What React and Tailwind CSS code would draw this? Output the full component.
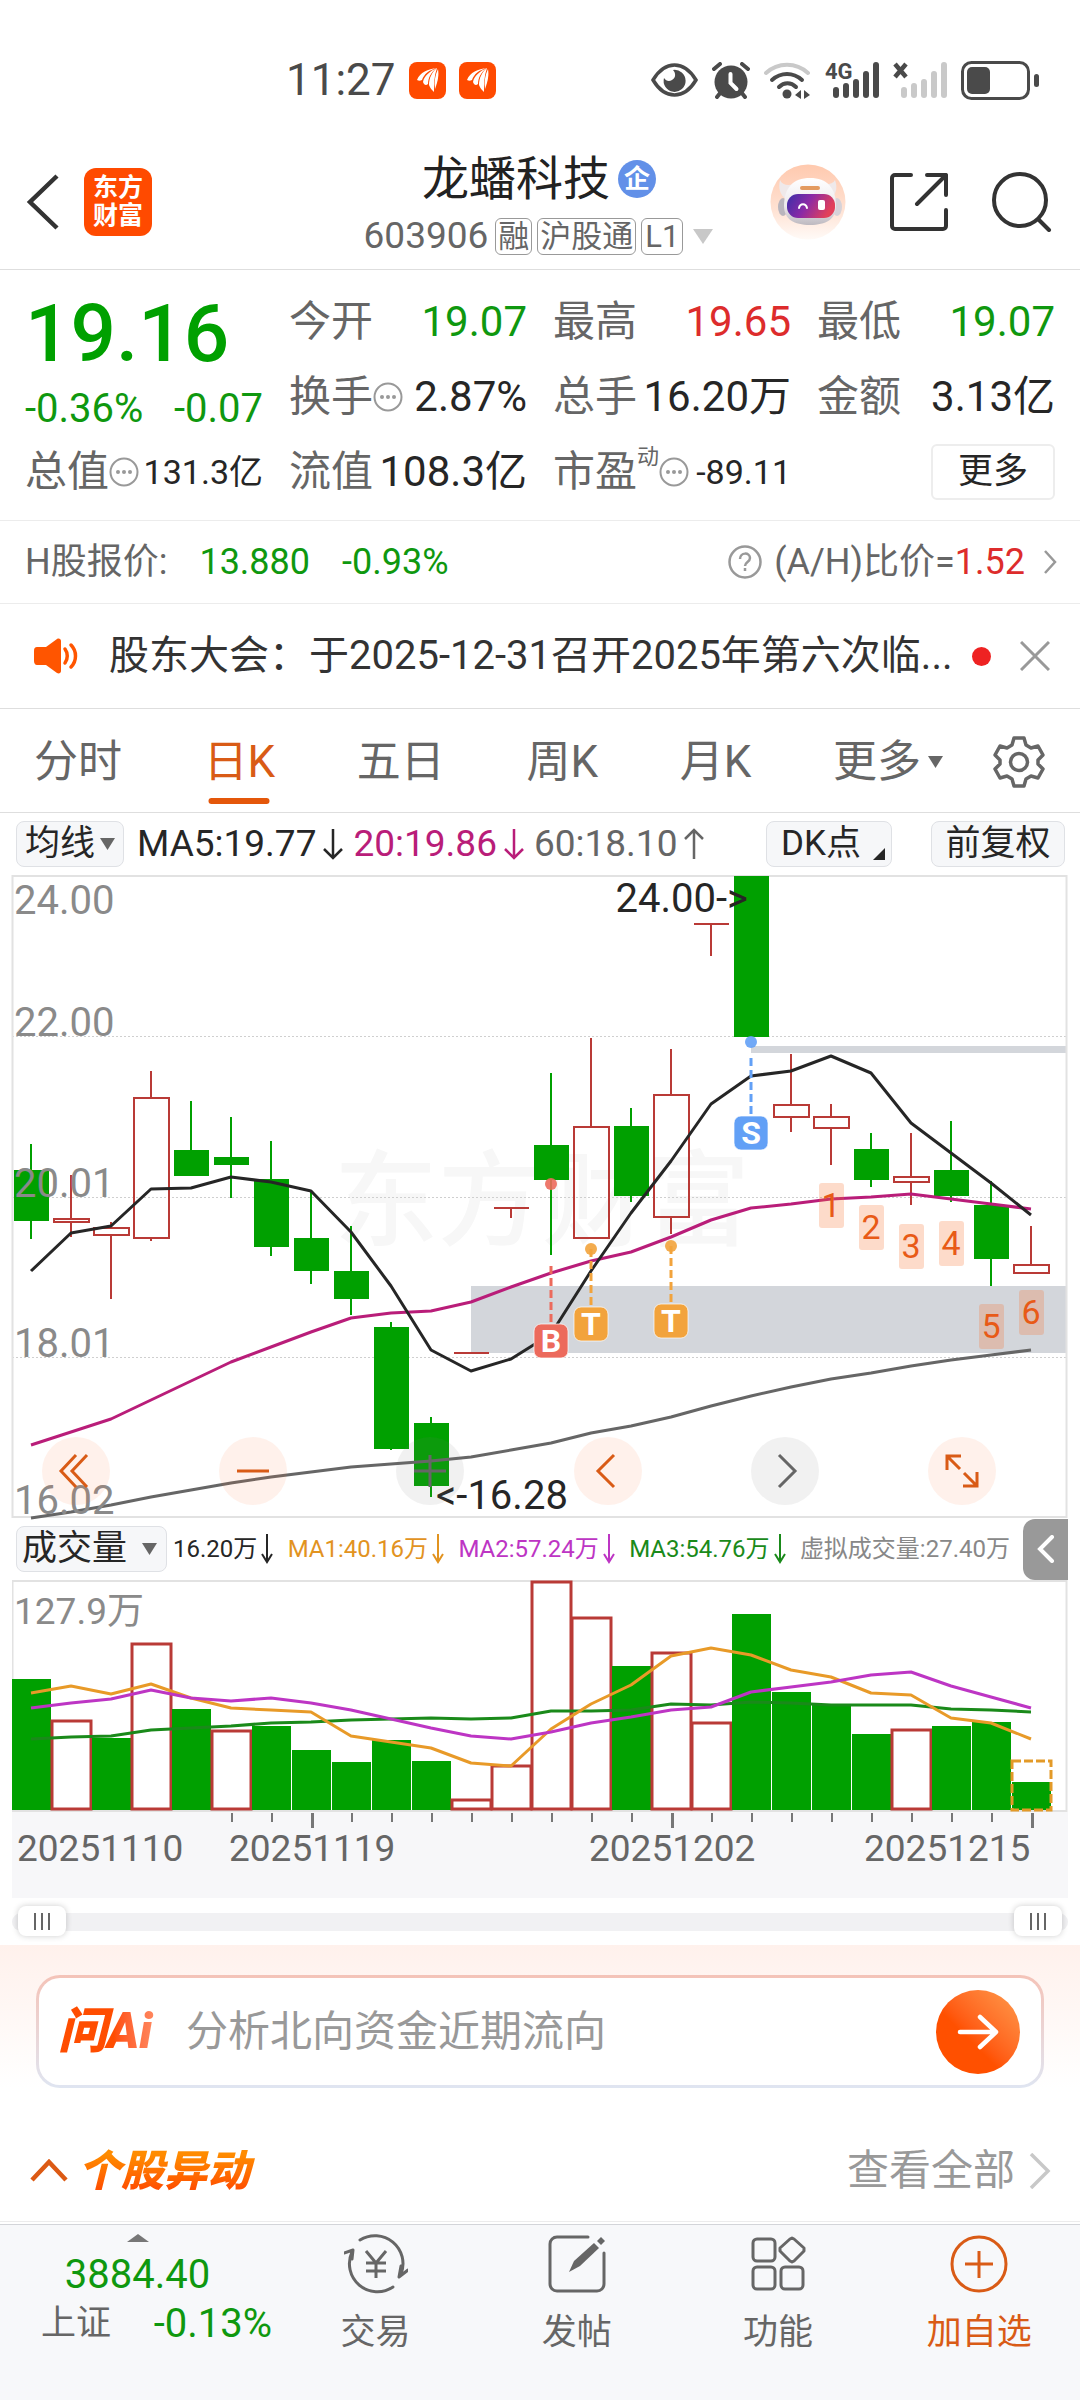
import React from "react";

const RED = "#b93a36";
const GREEN = "#00a000";

// [high, bodyTop, bodyBottom, low, direction] per trading day
const candles = [
  [1144, 1170, 1221, 1239, "down"],
  [1175, 1219, 1222, 1237, "up"],
  [1222, 1228, 1235, 1299, "up"],
  [1071, 1098, 1238, 1241, "up"],
  [1101, 1150, 1176, 1176, "down"],
  [1117, 1157, 1165, 1198, "down"],
  [1141, 1179, 1247, 1256, "down"],
  [1191, 1238, 1271, 1284, "down"],
  [1226, 1271, 1299, 1315, "down"],
  [1322, 1327, 1449, 1450, "down"],
  [1417, 1423, 1486, 1497, "down"],
  [1353, 1353, 1353, 1353, "flat"],
  [1208, 1208, 1208, 1218, "flat"],
  [1073, 1145, 1180, 1255, "down"],
  [1038, 1127, 1238, 1238, "up"],
  [1108, 1126, 1196, 1202, "down"],
  [1049, 1095, 1217, 1234, "up"],
  [924, 924, 924, 956, "flat"],
  [876, 876, 1037, 1037, "down"],
  [1054, 1105, 1117, 1132, "up"],
  [1104, 1117, 1128, 1165, "up"],
  [1133, 1149, 1180, 1187, "down"],
  [1133, 1177, 1182, 1205, "up"],
  [1121, 1170, 1196, 1202, "down"],
  [1181, 1205, 1259, 1286, "down"],
  [1226, 1265, 1273, 1273, "up"],
];

const dayX = (i) => 31 + i * 40;

const ma5 = [1271, 1233, 1226, 1189, 1188, 1177, 1182, 1191, 1232, 1286, 1350, 1371, 1359, 1334, 1271, 1213, 1161, 1104, 1076, 1071, 1056, 1073, 1123, 1153, 1183, 1215];
const ma20 = [1445, 1432, 1419, 1400, 1381, 1362, 1347, 1332, 1318, 1313, 1311, 1302, 1287, 1273, 1261, 1252, 1237, 1220, 1208, 1204, 1199, 1197, 1194, 1199, 1204, 1209];
const ma60 = [1518, 1512, 1505, 1497, 1490, 1483, 1477, 1472, 1467, 1464, 1461, 1457, 1450, 1443, 1433, 1426, 1417, 1406, 1396, 1387, 1379, 1373, 1366, 1360, 1355, 1350];

const volumes = [
  [1679, "down"], [1721, "up"], [1738, "down"], [1644, "up"], [1709, "down"], [1731, "up"], [1726, "down"],
  [1750, "down"], [1762, "down"], [1740, "down"], [1761, "down"], [1800, "up"], [1766, "up"], [1582, "up"],
  [1618, "up"], [1666, "down"], [1653, "up"], [1723, "up"], [1614, "down"], [1692, "down"], [1705, "down"],
  [1734, "down"], [1730, "up"], [1726, "down"], [1722, "down"], [1782, "down"],
];
const vma1 = [1693, 1686, 1694, 1684, 1698, 1708, 1710, 1712, 1736, 1742, 1748, 1763, 1766, 1729, 1704, 1685, 1656, 1648, 1655, 1670, 1677, 1693, 1695, 1718, 1723, 1739];
const vma2 = [1708, 1703, 1699, 1690, 1698, 1701, 1698, 1703, 1710, 1719, 1728, 1736, 1739, 1732, 1723, 1717, 1710, 1707, 1692, 1687, 1682, 1675, 1672, 1686, 1697, 1708];
const vma3 = [1739, 1737, 1736, 1730, 1728, 1726, 1723, 1722, 1720, 1719, 1718, 1719, 1718, 1711, 1711, 1710, 1704, 1705, 1702, 1703, 1705, 1705, 1705, 1709, 1710, 1712];

const toPoints = (ys) => ys.map((y, i) => `${dayX(i)},${y}`).join(" ");

function Candle({ x, data }) {
  const [high, top, bottom, low, kind] = data;
  if (kind === "down") {
    return (
      <g fill={GREEN} stroke="none">
        <rect x={x - 1} y={high} width="2" height={low - high} />
        <rect x={x - 17} y={top} width="35" height={bottom - top} />
      </g>
    );
  }
  return (
    <g stroke={RED} strokeWidth="2" fill="none">
      {high < top && <path d={`M${x} ${high}V${top}`} />}
      {low > bottom && <path d={`M${x} ${bottom}V${low}`} />}
      {kind === "flat" ? <path d={`M${x - 17} ${top}H${x + 18}`} /> : <rect x={x - 17} y={top} width="35" height={bottom - top} />}
    </g>
  );
}

function Marker({ x, y, dot, from, letter, color }) {
  return (
    <g>
      <circle cx={x} cy={dot} r="6" fill={color} opacity="0.9" />
      <path d={`M${x} ${from}V${y - 18}`} stroke={color} strokeWidth="3" strokeDasharray="8 4" />
      <rect x={x - 17} y={y - 17} width="34" height="34" rx="7" fill={color} stroke="#fff" strokeOpacity="0.7" />
      <text x={x} y={y + 11} fontSize="32" fontWeight="700" fill="#fff" textAnchor="middle">{letter}</text>
    </g>
  );
}

function PriceChart() {
  const counts = [[831, 1183], [871, 1205], [911, 1224], [951, 1221], [991, 1304], [1031, 1290]];
  return (
    <svg viewBox="12 875 1056 643" className="block w-full overflow-visible" role="img" aria-label="日K线图">
      <text x="334" y="1238" fontSize="104" fontWeight="500" fill="#f7f7f7">东方财富</text>
      <g stroke="#cfcfcf" strokeDasharray="2 2">
        <path d="M12 1036.500H1067M12 1197.500H1067M12 1357.500H1067" />
      </g>
      <rect x="471" y="1286" width="596" height="67" fill="#d3d6db" />
      <rect x="751" y="1046" width="316" height="7" fill="#d3d6db" />
      <rect x="12.500" y="876" width="1054" height="641" fill="none" stroke="#e2e2e2" strokeWidth="2" />
      {candles.map((c, i) => <Candle key={i} x={dayX(i)} data={c} />)}
      <g fill="none" strokeWidth="3" strokeLinejoin="round">
        <polyline points={toPoints(ma60)} stroke="#666" />
        <polyline points={toPoints(ma20)} stroke="#b91d79" />
        <polyline points={toPoints(ma5)} stroke="#262626" />
      </g>
      <g fontSize="40" fill="#8a8a8a">
        <text x="14" y="914">24.00</text>
        <text x="14" y="1036">22.00</text>
        <text x="14" y="1197">20.01</text>
        <text x="14" y="1357">18.01</text>
        <text x="14" y="1514">16.02</text>
      </g>
      <g fontSize="40" fill="#262626">
        <text x="748" y="912" textAnchor="end">24.00-&gt;</text>
        <text x="436" y="1509">&lt;-16.28</text>
      </g>
      <Marker x={751} y={1133} dot={1042} from={1058} letter="S" color="#62a0f6" />
      <Marker x={551} y={1341} dot={1184} from={1266} letter="B" color="#ec6a5c" />
      <Marker x={591} y={1324} dot={1249} from={1249} letter="T" color="#f2a33c" />
      <Marker x={671} y={1321} dot={1246} from={1246} letter="T" color="#f2a33c" />
      {counts.map(([x, y], i) => (
        <g key={x}>
          <rect x={x - 12} y={y} width="25" height="45" rx="3" fill="#f97332" fillOpacity="0.26" />
          <text x={x} y={y + 34} fontSize="34" textAnchor="middle" fill="#e85a17">{i + 1}</text>
        </g>
      ))}
    </svg>
  );
}

function VolumeChart() {
  return (
    <svg viewBox="12 1580 1056 318" className="block w-full" role="img" aria-label="成交量图">
      <rect x="12" y="1812" width="1056" height="86" fill="#f7f7f9" />
      <rect x="12.500" y="1581" width="1054" height="230" fill="none" stroke="#e2e2e2" strokeWidth="2" />
      <text x="14" y="1624" fontSize="37" fill="#8a8a8a">127.9万</text>
      {volumes.map(([top, kind], i) =>
        kind === "down" ? (
          <rect key={i} x={dayX(i) - 19} y={top} width="39" height={1810 - top} fill={GREEN} />
        ) : (
          <rect key={i} x={dayX(i) - 19} y={top} width="39" height={1809 - top} fill="#fff" stroke={RED} strokeWidth="3" />
        )
      )}
      <rect x="1012" y="1761" width="39" height="49" fill="none" stroke="#e39a28" strokeWidth="3" strokeDasharray="9 3" />
      <g fill="none" strokeWidth="3" strokeLinejoin="round">
        <polyline points={toPoints(vma3)} stroke="#1a8a1a" />
        <polyline points={toPoints(vma1)} stroke="#e89a28" />
        <polyline points={toPoints(vma2)} stroke="#bd35c4" />
      </g>
      <g fill="#777">
        {Array.from({ length: 21 }, (_, k) => k + 5).map((i) => {
          const major = i === 7 || i === 16 || i === 25;
          return <rect key={i} x={dayX(i)} y="1813" width={major ? 3 : 2} height={major ? 15 : 9} />;
        })}
      </g>
      <g fontSize="37" fill="#666">
        <text x="17" y="1861">20251110</text>
        <text x="229" y="1861">20251119</text>
        <text x="589" y="1861">20251202</text>
        <text x="864" y="1861">20251215</text>
      </g>
    </svg>
  );
}

function AppBadge() {
  return (
    <svg viewBox="0 0 37 37" className="size-[37px]" aria-hidden="true">
      <rect width="37" height="37" rx="8" fill="#ff4a00" />
      <g fill="#fff">
        <path d="M28 6c-9 1-17 4-20 12 2 1 3 1 5 0C15 12 20 8 28 6z" />
        <path d="M28 6c-7 3-13 8-14 14 1 3 3 4 5 2 0-6 3-12 9-16z" />
        <path d="M28 6c-5 4-8 10-8 17 1 3 3 5 5 7 0-8 0-16 3-24z" />
        <path d="M29 7c1 6 0 12-3 20-1-7 0-14 3-20z" />
      </g>
    </svg>
  );
}

function SignalBars({ tops, color, start }) {
  return tops.map((t, i) => <rect key={i} x={start + i * 10} y={t} width="6" height={36 - t} rx="3" fill={color} />);
}

function StatusBar() {
  return (
    <div className="flex h-[134px] items-center justify-between pt-[26px] pr-[41px] pl-[286px] text-[#4a4a4a]">
      <div className="flex items-center gap-[13px]">
        <span className="text-[44px] leading-[48px]">11:27</span>
        <AppBadge />
        <AppBadge />
      </div>
      <div className="flex items-center gap-[14px]">
        <svg viewBox="0 0 47 34" className="h-[34px] w-[47px]" aria-hidden="true">
          <path d="M2 17C8 7 15 2 23.500 2S39 7 45 17C39 27 32 32 23.500 32S8 27 2 17z" fill="none" stroke="#4a4a4a" strokeWidth="3.500" />
          <path d="M22 7a11 11 0 1 1-9 8c2 3 5 4 8 2 4-2 4-7 1-10z" fill="#4a4a4a" />
        </svg>
        <svg viewBox="0 0 38 37" className="h-[37px] w-[38px]" aria-hidden="true">
          <circle cx="19" cy="20" r="16.500" fill="#4a4a4a" />
          <path d="M2 7l6-5M36 7l-6-5M5 35l4-5M33 35l-4-5" stroke="#4a4a4a" strokeWidth="4" strokeLinecap="round" />
          <path d="M18.500 12v9l6 6" fill="none" stroke="#fff" strokeWidth="4" strokeLinecap="round" />
        </svg>
        <svg viewBox="0 0 47 37" className="h-[37px] w-[47px]" aria-hidden="true">
          <g fill="none" strokeWidth="4" strokeLinecap="round">
            <path d="M2 11C14 0 32 0 44 11" stroke="#c9c9c9" />
            <path d="M8 18c9-8 21-8 30 0M15 25c5-5 12-5 17 0" stroke="#4a4a4a" />
          </g>
          <circle cx="23" cy="32" r="4.500" fill="#4a4a4a" />
          <path d="M31 33l6-5v9zM46 33l-6 4V28z" fill="#4a4a4a" />
        </svg>
        <svg viewBox="0 0 54 36" className="h-[36px] w-[54px] overflow-visible" aria-hidden="true">
          <text x="0" y="17" fontSize="22" fontWeight="700" fill="#4a4a4a">4G</text>
          <SignalBars tops={[25, 21, 17, 9, 0]} color="#4a4a4a" start={8} />
        </svg>
        <svg viewBox="0 0 54 36" className="h-[36px] w-[54px]" aria-hidden="true">
          <path d="M2 2l11 13M13 2L2 15" stroke="#4a4a4a" strokeWidth="4.500" />
          <SignalBars tops={[25, 21, 17, 9, 0]} color="#c9c9c9" start={8} />
        </svg>
        <svg viewBox="0 0 78 39" className="h-[39px] w-[78px]" aria-hidden="true">
          <rect x="1.500" y="1.500" width="66" height="36" rx="9" fill="none" stroke="#4a4a4a" strokeWidth="3" />
          <rect x="6" y="6" width="23" height="27" rx="5" fill="#4a4a4a" />
          <rect x="73" y="13" width="5" height="13" rx="2.500" fill="#4a4a4a" />
        </svg>
      </div>
    </div>
  );
}

function RobotIcon() {
  return (
    <svg viewBox="0 0 76 76" className="size-[76px]" aria-hidden="true">
      <defs>
        <linearGradient id="robotBg" x1="0" y1="0" x2="0" y2="1">
          <stop offset="0" stopColor="#ffc9ae" />
          <stop offset="0.600" stopColor="#ffe2d3" />
          <stop offset="1" stopColor="#fffaf7" />
        </linearGradient>
        <linearGradient id="robotFace" x1="0" y1="0" x2="1" y2="0.300">
          <stop offset="0" stopColor="#3a2fa8" />
          <stop offset="0.500" stopColor="#8b2aa6" />
          <stop offset="1" stopColor="#e2405a" />
        </linearGradient>
        <linearGradient id="robotHead" x1="0" y1="0" x2="0" y2="1">
          <stop offset="0" stopColor="#fff" />
          <stop offset="0.600" stopColor="#ece9ec" />
          <stop offset="1" stopColor="#bdb9c0" />
        </linearGradient>
      </defs>
      <circle cx="38" cy="38" r="37.500" fill="url(#robotBg)" />
      <ellipse cx="13" cy="43" rx="5" ry="9" fill="#b9b5bd" />
      <ellipse cx="67" cy="43" rx="5" ry="9" fill="#d6d2d8" />
      <path d="M10 16c-2 8 0 15 6 19l8-15c-6 2-12 1-14-4zM65 16c3 8 1 15-5 19l-8-15c6 1 11 0 13-4z" fill="#efe9ea" />
      <path d="M14 42c0-18 9-28 26-28s26 10 26 28c0 13-10 19-26 19S14 55 14 42z" fill="url(#robotHead)" />
      <rect x="30" y="22" width="20" height="4" rx="2" fill="#e39a5f" />
      <rect x="17" y="30" width="48" height="24" rx="11" fill="url(#robotFace)" />
      <path d="M29 44c1-5 7-5 8 0" fill="none" stroke="#fff" strokeWidth="2" strokeLinecap="round" />
      <rect x="48" y="36" width="7" height="10" rx="2" fill="#fff" />
    </svg>
  );
}

function Header() {
  return (
    <header className="grid h-[136px] grid-cols-[1fr_auto_1fr] items-center border-b border-[#dedede] pr-[28px] pl-[26px]">
      <div className="flex items-center gap-[24px]">
        <button type="button" aria-label="返回">
          <svg viewBox="0 0 34 56" className="h-[56px] w-[34px]" fill="none" stroke="#333" strokeWidth="4.500">
            <path d="M31 2L4 28l27 26" />
          </svg>
        </button>
        <div className="flex size-[68px] flex-col items-center justify-center rounded-xl bg-[#ff4a00] text-[25px] leading-[28px] font-bold text-white">
          <span>东方</span>
          <span>财富</span>
        </div>
      </div>
      <div className="flex flex-col items-center gap-[4px] pt-[5px]">
        <h1 className="flex items-center gap-[8px] text-[47px] leading-[60px] text-[#222]">
          龙蟠科技
          <span className="flex size-[38px] items-center justify-center rounded-full bg-[#6290e8] text-[26px] leading-[38px] font-bold text-white">企</span>
        </h1>
        <div className="flex items-center gap-[5px] text-[37px] leading-[46px] text-[#666]">
          <span className="pr-[2px]">603906</span>
          <span className="rounded-md border border-[#999] px-[2px] text-[31px] leading-[35px]">融</span>
          <span className="rounded-md border border-[#999] px-[2px] text-[31px] leading-[35px]">沪股通</span>
          <span className="rounded-md border border-[#999] px-[3px] text-[31px] leading-[35px]">L1</span>
          <svg viewBox="0 0 22 15" className="ml-[4px] h-[15px] w-[22px]" aria-hidden="true">
            <path d="M1 0h20L11 15z" fill="#c8c8c8" />
          </svg>
        </div>
      </div>
      <div className="flex items-center justify-end gap-[44px]">
        <button type="button" aria-label="智能助手">
          <RobotIcon />
        </button>
        <button type="button" aria-label="分享">
          <svg viewBox="0 0 58 58" className="size-[58px]" fill="none" stroke="#333" strokeWidth="4" strokeLinecap="round" strokeLinejoin="round">
            <path d="M21 2H5a3 3 0 0 0-3 3v48a3 3 0 0 0 3 3h48a3 3 0 0 0 3-3V37" />
            <path d="M37 2h19v20M56 2L27 31" />
          </svg>
        </button>
        <button type="button" aria-label="搜索">
          <svg viewBox="0 0 60 60" className="size-[60px]" fill="none" stroke="#333" strokeWidth="4" strokeLinecap="round">
            <circle cx="28" cy="28" r="26" />
            <path d="M47 48l10 10" />
          </svg>
        </button>
      </div>
    </header>
  );
}

function DotsIcon() {
  return (
    <svg viewBox="0 0 30 30" className="size-[30px] shrink-0" aria-hidden="true">
      <circle cx="15" cy="15" r="13.500" fill="none" stroke="#999" strokeWidth="2" />
      <g fill="#999">
        <circle cx="9" cy="15" r="2" />
        <circle cx="15" cy="15" r="2" />
        <circle cx="21" cy="15" r="2" />
      </g>
    </svg>
  );
}

function Stat({ label, value, color = "text-[#262626]", dots, small, sup }) {
  return (
    <div className="flex h-[75px] items-center justify-between whitespace-nowrap">
      <span className="flex items-center text-[42px] leading-[50px] text-[#666]">
        {label}
        {sup && <sup className="top-0 self-start text-[22px] leading-[20px]">{sup}</sup>}
        {dots && <DotsIcon />}
      </span>
      <span className={`${small ? "text-[34px]" : "text-[42px]"} leading-[50px] ${color}`}>{value}</span>
    </div>
  );
}

function Quote() {
  const green = "text-[#0f980f]";
  return (
    <section className="grid grid-cols-4 gap-x-[26px] border-b border-[#ececec] px-[25px] pt-[14px] pb-[11px]">
      <div className="row-span-2">
        <div className="text-[80px] leading-[100px] font-medium text-[#00a000]">19.16</div>
        <div className={`flex justify-between text-[40px] leading-[50px] ${green}`}>
          <span>-0.36%</span>
          <span>-0.07</span>
        </div>
      </div>
      <Stat label="今开" value="19.07" color={green} />
      <Stat label="最高" value="19.65" color="text-[#dd2c2c]" />
      <Stat label="最低" value="19.07" color={green} />
      <Stat label="换手" value="2.87%" dots />
      <Stat label="总手" value="16.20万" />
      <Stat label="金额" value="3.13亿" />
      <Stat label="总值" value="131.3亿" dots small />
      <Stat label="流值" value="108.3亿" />
      <Stat label="市盈" value="-89.11" sup="动" dots small />
      <div className="flex h-[75px] items-center justify-end">
        <button type="button" className="h-[56px] w-[124px] rounded-md border-2 border-[#ededed] text-[35px] leading-[50px] text-[#262626]">更多</button>
      </div>
    </section>
  );
}

function HShare() {
  return (
    <a href="#h-share" className="flex h-[83px] items-center justify-between border-b border-[#ececec] pr-[23px] pb-px pl-[25px] text-[36px] leading-[46px] text-[#666]">
      <span className="flex items-center">
        H股报价:
        <span className="ml-[32px] text-[#0f980f]">13.880</span>
        <span className="ml-[32px] text-[#0f980f]">-0.93%</span>
      </span>
      <span className="flex items-center">
        <svg viewBox="0 0 34 34" className="mr-[12px] size-[34px]" aria-hidden="true" fill="none" stroke="#999" strokeWidth="2.500">
          <circle cx="17" cy="17" r="15.500" />
          <path d="M12 14c0-7 10-7 10-1 0 4-5 4-5 8M17 23v3" />
        </svg>
        (A/H)比价=<span className="text-[#dd2c2c]">1.52</span>
        <svg viewBox="0 0 13 24" className="ml-[19px] h-[24px] w-[13px]" aria-hidden="true" fill="none" stroke="#999" strokeWidth="2.500">
          <path d="M1 1l10 11L1 23" />
        </svg>
      </span>
    </a>
  );
}

function Notice() {
  return (
    <div className="flex h-[105px] items-center border-b border-[#dedede] pr-[30px] pl-[33px]">
      <svg viewBox="0 0 46 36" className="mr-[30px] h-[36px] w-[46px] shrink-0" aria-hidden="true">
        <path d="M4 9h9L24 1c2-1 4 0 4 2v30c0 2-2 3-4 2L13 27H4c-2 0-3-2-3-4V13c0-3 1-4 3-4z" fill="#ff5500" />
        <path d="M32 11c3 4 3 10 0 14M38 7c6 6 6 16 0 22" fill="none" stroke="#ff5500" strokeWidth="3.500" strokeLinecap="round" />
      </svg>
      <p className="min-w-0 flex-1 truncate text-[40px] leading-[50px] text-[#333]">股东大会：于2025-12-31召开2025年第六次临...</p>
      <span className="ml-1 size-[19px] shrink-0 rounded-full bg-[#ee2222]" />
      <button type="button" aria-label="关闭" className="ml-[29px]">
        <svg viewBox="0 0 30 30" className="size-[30px]" stroke="#999" strokeWidth="3">
          <path d="M1 1l28 28M29 1L1 29" />
        </svg>
      </button>
    </div>
  );
}

function Tabs() {
  const tabs = ["分时", "日K", "五日", "周K", "月K"];
  return (
    <nav className="flex h-[104px] items-center border-b border-[#dedede] pt-[2px] pr-[35px] pl-[34px] text-[44px] leading-[56px] text-[#666]">
      <div className="flex h-full flex-1 items-center justify-between">
        {tabs.map((t) =>
          t === "日K" ? (
            <button type="button" key={t} aria-current="page" className="relative flex h-full items-center text-[#d95b16]">
              {t}
              <span className="absolute bottom-[8px] left-1/2 h-[6px] w-[61px] -translate-x-1/2 rounded-full bg-[#e4570a]" />
            </button>
          ) : (
            <button type="button" key={t}>{t}</button>
          )
        )}
        <button type="button" className="flex items-center gap-[7px]">
          更多
          <svg viewBox="0 0 15 12" className="h-[12px] w-[15px]" aria-hidden="true">
            <path d="M0 0h15L7.500 12z" fill="#666" />
          </svg>
        </button>
      </div>
      <button type="button" aria-label="设置" className="ml-[50px]">
        <svg viewBox="0 0 52 52" className="size-[52px]" fill="none" stroke="#666" strokeWidth="3.500" strokeLinejoin="round">
          <path d="M21 2h10l2 7 5 3 7-2 5 9-5 5v4l5 5-5 9-7-2-5 3-2 7H21l-2-7-5-3-7 2-5-9 5-5v-4l-5-5 5-9 7 2 5-3z" />
          <circle cx="26" cy="26" r="8.500" />
        </svg>
      </button>
    </nav>
  );
}

function Arrow({ up }) {
  return (
    <svg viewBox="0 0 20 32" className="h-[32px] w-[20px] shrink-0" fill="none" stroke="currentColor" strokeWidth="2.500" aria-hidden="true">
      <path d={up ? "M10 31V2M1 11l9-9 9 9" : "M10 1v29M1 21l9 9 9-9"} />
    </svg>
  );
}

function SmallArrow() {
  return (
    <svg viewBox="0 0 12 30" className="h-[30px] w-[12px] shrink-0" fill="none" stroke="currentColor" strokeWidth="2" aria-hidden="true">
      <path d="M6 0v28M1 20l5 8 5-8" />
    </svg>
  );
}

const chip = "h-[46px] rounded-lg border border-[#dfe1e5] bg-[#f6f7f9] text-[35px] leading-[44px] text-[#262626]";

function MaRow() {
  return (
    <div className="flex h-[62px] items-center pr-[15px] pl-[16px] text-[37px] leading-[46px] whitespace-nowrap">
      <label className={`${chip} relative flex w-[108px] items-center`}>
        <select aria-label="均线" className="w-full appearance-none bg-transparent pl-[8px] outline-none">
          <option>均线</option>
        </select>
        <svg viewBox="0 0 15 12" className="pointer-events-none absolute right-[8px] h-[12px] w-[15px]" aria-hidden="true">
          <path d="M0 0h15L7.500 12z" fill="#666" />
        </svg>
      </label>
      <span className="ml-[13px] flex items-center gap-[7px] text-[#262626]">MA5:19.77<Arrow /></span>
      <span className="ml-[10px] flex items-center gap-[7px] text-[#b91d79]">20:19.86<Arrow /></span>
      <span className="ml-[10px] flex items-center gap-[7px] text-[#666]">60:18.10<Arrow up /></span>
      <button type="button" className={`${chip} relative mr-[39px] ml-auto w-[126px] pr-[16px]`}>
        DK点
        <svg viewBox="0 0 12 12" className="absolute right-[6px] bottom-[6px] size-[12px]" aria-hidden="true">
          <path d="M12 0v12H0z" fill="#262626" />
        </svg>
      </button>
      <button type="button" className={`${chip} w-[134px]`}>前复权</button>
    </div>
  );
}

function RoundButton({ label, muted, children }) {
  return (
    <button
      type="button"
      aria-label={label}
      className={`flex size-[68px] items-center justify-center rounded-full ${muted ? "bg-[#777]/10 text-[#666]" : "bg-[#ff7a3c]/10 text-[#d95b16]"}`}
    >
      <svg viewBox="0 0 36 36" className="size-[36px]" fill="none" stroke="currentColor" strokeWidth="3">
        {children}
      </svg>
    </button>
  );
}

function ChartControls() {
  return (
    <div className="absolute right-[72px] bottom-[13px] left-[30px] flex justify-between">
      <RoundButton label="最早"><path d="M18 2L3 18l15 16M29 2L14 18l15 16" /></RoundButton>
      <RoundButton label="缩小"><path d="M2 18h32" /></RoundButton>
      <RoundButton label="放大" muted><path d="M2 18h32M18 2v32" /></RoundButton>
      <RoundButton label="向左"><path d="M24 2L8 18l16 16" /></RoundButton>
      <RoundButton label="向右" muted><path d="M12 2l16 16-16 16" /></RoundButton>
      <RoundButton label="全屏"><path d="M3 17V3h14M3 3l13 13M33 19v14H19M33 33L20 20" /></RoundButton>
    </div>
  );
}

function VolumeRow() {
  return (
    <div className="flex h-[62px] items-center pl-[16px] text-[24px] leading-[46px] whitespace-nowrap">
      <label className={`${chip} relative flex w-[151px] items-center`}>
        <select aria-label="副图指标" className="w-full appearance-none bg-transparent pl-[5px] outline-none">
          <option>成交量</option>
        </select>
        <svg viewBox="0 0 15 12" className="pointer-events-none absolute right-[9px] h-[12px] w-[15px]" aria-hidden="true">
          <path d="M0 0h15L7.500 12z" fill="#666" />
        </svg>
      </label>
      <div className="mr-[13px] ml-[6px] flex flex-1 items-center justify-between">
        <span className="flex items-center gap-[4px] text-[#262626]">16.20万<SmallArrow /></span>
        <span className="flex items-center gap-[4px] text-[#e2931f]">MA1:40.16万<SmallArrow /></span>
        <span className="flex items-center gap-[4px] text-[#bd35c4]">MA2:57.24万<SmallArrow /></span>
        <span className="flex items-center gap-[4px] text-[#1a8a1a]">MA3:54.76万<SmallArrow /></span>
        <span className="text-[#888]">虚拟成交量:27.40万</span>
      </div>
      <button type="button" aria-label="展开指标" className="mr-[12px] flex h-[61px] w-[45px] items-center justify-center rounded-l-xl bg-[#999]">
        <svg viewBox="0 0 18 28" className="h-[28px] w-[18px]" fill="none" stroke="#fff" strokeWidth="4" strokeLinecap="round">
          <path d="M15 2L3 14l12 12" />
        </svg>
      </button>
    </div>
  );
}

const range =
  "pointer-events-none absolute inset-x-[6px] top-[8px] h-[30px] appearance-none bg-transparent [&::-webkit-slider-thumb]:pointer-events-auto [&::-webkit-slider-thumb]:h-[30px] [&::-webkit-slider-thumb]:w-[48px] [&::-webkit-slider-thumb]:appearance-none [&::-webkit-slider-thumb]:rounded-lg [&::-webkit-slider-thumb]:bg-white [&::-webkit-slider-thumb]:bg-[linear-gradient(90deg,#666_2px,transparent_2px,transparent_7px,#666_7px,#666_9px,transparent_9px,transparent_14px,#666_14px,#666_16px,transparent_16px)] [&::-webkit-slider-thumb]:bg-[length:16px_17px] [&::-webkit-slider-thumb]:bg-center [&::-webkit-slider-thumb]:bg-no-repeat [&::-webkit-slider-thumb]:shadow-[0_0_6px_rgba(0,0,0,0.2)]";

function RangeSlider() {
  return (
    <div className="relative mx-[12px] flex h-[47px] items-center">
      <div className="h-[18px] w-full rounded-full bg-[#f1f1f3]" />
      <input type="range" aria-label="起始日期" defaultValue="0" className={range} />
      <input type="range" aria-label="结束日期" defaultValue="100" className={range} />
    </div>
  );
}

function AskAi() {
  return (
    <section className="bg-linear-to-b from-[#fff1ec] to-white px-[36px] pt-[30px]">
      <div className="rounded-3xl bg-linear-to-b from-[#f4c3b8] to-[#dfe5f1] p-[3px]">
        <form className="flex h-[107px] items-center rounded-[21px] bg-white pt-px pr-[21px] pl-[19px]">
          <span aria-label="问Ai" className="flex w-[112px] items-center bg-linear-to-r from-[#ff4d00] from-50% to-[#ff9a75] bg-clip-text text-[49px] leading-[56px] font-black text-transparent italic">
            问Ai
          </span>
          <input
            type="text"
            aria-label="向AI提问"
            placeholder="分析北向资金近期流向"
            className="ml-[16px] min-w-0 flex-1 text-[42px] leading-[56px] outline-none placeholder:text-[#999] placeholder:opacity-100"
          />
          <button type="button" aria-label="发送" className="flex size-[84px] items-center justify-center rounded-full bg-linear-to-tr from-[#ff5000] from-40% to-[#ff9a4a]">
            <svg viewBox="0 0 42 36" className="h-[36px] w-[42px]" fill="none" stroke="#fff" strokeWidth="4.500" strokeLinecap="round" strokeLinejoin="round">
              <path d="M3 18h36M23 3l16 15-16 15" />
            </svg>
          </button>
        </form>
      </div>
    </section>
  );
}

function MovesHeader() {
  return (
    <section className="flex h-[134px] items-center justify-between border-b border-[#ececec] pt-[32px] pr-[29px] pl-[30px]">
      <h2 className="flex items-center gap-[10px]">
        <svg viewBox="0 0 38 23" className="h-[23px] w-[38px]" fill="none" stroke="#dc5a14" strokeWidth="4.500" aria-hidden="true">
          <path d="M2 21L19 3l17 18" />
        </svg>
        <span className="bg-linear-to-b from-[#ff8c00] from-20% to-[#ff5000] to-80% bg-clip-text pr-2 text-[43px] leading-[56px] font-black text-transparent italic">个股异动</span>
      </h2>
      <a href="#all" className="flex items-center gap-[14px] text-[42px] leading-[56px] text-[#999]">
        查看全部
        <svg viewBox="0 0 22 36" className="h-[36px] w-[22px]" fill="none" stroke="#c8c8c8" strokeWidth="3.500" aria-hidden="true">
          <path d="M2 1l17 17L2 35" />
        </svg>
      </a>
    </section>
  );
}

function NavItem({ label, accent, children }) {
  return (
    <button type="button" className={`flex flex-1 flex-col items-center gap-[15px] text-[35px] leading-[48px] ${accent ? "text-[#d95b16]" : "text-[#666]"}`}>
      <svg viewBox="0 0 64 60" className="h-[60px] w-[64px]" fill="none" stroke="currentColor" strokeWidth="3" strokeLinecap="round" strokeLinejoin="round" aria-hidden="true">
        {children}
      </svg>
      {label}
    </button>
  );
}

function BottomNav() {
  return (
    <nav className="mt-[2px] flex flex-1 items-start border-t border-[#d3d5d9] bg-[#f7f8fa] pt-[9px]">
      <a href="#index" className="flex w-[275px] flex-col items-center">
        <svg viewBox="0 0 22 8" className="h-[8px] w-[22px]" aria-hidden="true">
          <path d="M0 8L11 0l11 8z" fill="#777" />
        </svg>
        <span className="mt-[8px] text-[40px] leading-[50px] text-[#0f980f]">3884.40</span>
        <span className="flex w-full items-center justify-between pr-[3px] pl-[41px] text-[35px] leading-[48px] text-[#666]">
          上证<span className="text-[40px] text-[#0f980f]">-0.13%</span>
        </span>
      </a>
      <NavItem label="交易">
        <path d="M16 6A28 28 0 0 1 57 40M64 36l-9 7 2-11" />
        <path d="M49 53A28 28 0 0 1 8 18M0 19l9-3-1 9" />
        <path d="M22 17l10 12 10-12M32 29v15M22 29h20M22 37h20" strokeLinecap="butt" />
      </NavItem>
      <NavItem label="发帖">
        <path d="M43 3H12a7 7 0 0 0-7 7v40a7 7 0 0 0 7 7h40a7 7 0 0 0 7-7V19" />
        <path d="M24 38l5-11 20-18 5 5-19 18z" fill="currentColor" stroke="none" />
        <path d="M52 7l4-4 4 4-4 4z" fill="currentColor" stroke="none" />
      </NavItem>
      <NavItem label="功能">
        <rect x="7" y="5" width="22" height="22" rx="4" />
        <path d="M44 5l2-1 2 1 10 9v3l-10 10-2 1-2-1-10-10v-3z" />
        <rect x="7" y="33" width="22" height="22" rx="4" />
        <rect x="35" y="33" width="22" height="22" rx="4" />
      </NavItem>
      <NavItem label="加自选" accent>
        <circle cx="32" cy="30" r="27" />
        <path d="M32 17v27M18 30h28" strokeLinecap="butt" />
      </NavItem>
    </nav>
  );
}

export default function App() {
  return (
    <div className="flex min-h-screen flex-col bg-white font-['Roboto','Noto_Sans_CJK_SC',sans-serif]">
      <StatusBar />
      <Header />
      <Quote />
      <HShare />
      <Notice />
      <Tabs />
      <MaRow />
      <div className="relative mx-[12px]">
        <PriceChart />
        <ChartControls />
      </div>
      <VolumeRow />
      <div className="mx-[12px]">
        <VolumeChart />
      </div>
      <RangeSlider />
      <AskAi />
      <MovesHeader />
      <BottomNav />
    </div>
  );
}
